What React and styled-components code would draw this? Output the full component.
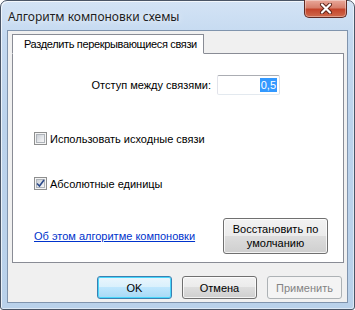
import styled, { createGlobalStyle, css } from "styled-components";

const GlobalStyle = createGlobalStyle`
  html, body { margin: 0; padding: 0; background: #ffffff; }
  body { font-family: "Liberation Sans", Arial, sans-serif; font-size: 11px; }
`;

const Window = styled.div`
  width: 355px;
  height: 310px;
  box-sizing: border-box;
  border: 1px solid #4a5566;
  border-radius: 7px 7px 3px 3px;
  background: linear-gradient(180deg, #d3e3f5 0%, #c4d9f0 12%, #bcd3ec 40%, #b9d1ea 100%);
  display: flex;
  flex-direction: column;
  padding: 0 6px 6px 6px;
  box-shadow: inset 1px 1px 0 rgba(255, 255, 255, 0.7), inset -1px -1px 0 rgba(255, 255, 255, 0.5);
`;

const TitleBar = styled.div`
  height: 29px;
  display: flex;
  align-items: flex-start;
  justify-content: space-between;
`;

const Title = styled.span`
  font-family: "Noto Sans", "Open Sans", sans-serif;
  font-size: 12px;
  color: #1e1e1e;
  margin: 7px 0 0 1px;
  text-shadow: 0 0 6px rgba(255, 255, 255, 0.9);
`;

const CloseButton = styled.div`
  width: 43px;
  height: 18px;
  margin-top: -1px;
  margin-right: 1px;
  box-sizing: border-box;
  border: 1px solid #5e2a24;
  border-top: none;
  border-radius: 0 0 5px 5px;
  background: linear-gradient(180deg, #e9a89a 0%, #d77f6c 45%, #c4442b 55%, #cf6a4c 100%);
  box-shadow: inset 0 0 0 1px rgba(255, 255, 255, 0.35);
  display: flex;
  align-items: center;
  justify-content: center;
`;

const Client = styled.div`
  flex: 1;
  background: #f0f0f0;
  border: 1px solid #8094ad;
  display: flex;
  flex-direction: column;
  padding: 3px 3px 0 4px;
`;

const TabStrip = styled.div`
  display: flex;
  position: relative;
  z-index: 1;
  margin-bottom: -1px;
`;

const Tab = styled.div`
  height: 20px;
  padding: 0 0 0 11px;
  width: 192px;
  box-sizing: border-box;
  background: #ffffff;
  border: 1px solid #898c95;
  border-bottom: 1px solid #ffffff;
  display: flex;
  align-items: center;
  white-space: nowrap;
  letter-spacing: -0.35px;
  color: #000;
`;

const Panel = styled.div`
  height: 210px;
  box-sizing: border-box;
  background: #ffffff;
  border: 1px solid #898c95;
  display: flex;
  flex-direction: column;
  padding: 21px 15px 0 21px;
`;

const FieldRow = styled.div`
  display: flex;
  align-items: center;
  justify-content: flex-end;
  gap: 6px;
  margin-right: 48px;
`;

const Label = styled.span`
  color: #000;
`;

const TextBox = styled.div`
  width: 63px;
  height: 20px;
  box-sizing: border-box;
  border: 1px solid #abadb3;
  border-color: #abadb3 #dbdfe6 #e3e9ef #e2e3ea;
  border-radius: 2px;
  background: #fff;
  display: flex;
  align-items: center;
  justify-content: flex-end;
  padding-right: 2px;
`;

const Selected = styled.span`
  background: #3399ff;
  color: #ffffff;
  line-height: 14px;
  padding: 0 1px;
`;

const CheckRow = styled.label`
  display: flex;
  align-items: center;
  gap: 3px;
  margin-top: ${(p) => p.$top}px;
  color: #000;
`;

const Box = styled.span`
  width: 13px;
  height: 13px;
  box-sizing: border-box;
  border: 1px solid #8e8f8f;
  background: #f4f4f4;
  position: relative;
  display: inline-flex;
  align-items: center;
  justify-content: center;
  &::before {
    content: "";
    position: absolute;
    inset: 1px;
    background: linear-gradient(135deg, #cbcfd5 0%, #e6e8eb 60%, #f6f6f6 100%);
    border: 1px solid #aeb3b9;
  }
  svg { position: relative; }
`;

const BottomRow = styled.div`
  display: flex;
  align-items: center;
  justify-content: space-between;
  margin-top: 28px;
`;

const Link = styled.a`
  color: #0033cc;
  text-decoration: underline;
  cursor: pointer;
`;

const buttonBase = css`
  box-sizing: border-box;
  font-family: "Liberation Sans", Arial, sans-serif;
  font-size: 11px;
  font-weight: normal;
  border-radius: 3px;
  border: 1px solid #707070;
  background: linear-gradient(180deg, #f2f2f2 0%, #ebebeb 49%, #dddddd 50%, #cfcfcf 100%);
  box-shadow: inset 0 0 0 1px rgba(255, 255, 255, 0.75);
  color: #000;
  padding: 0;
`;

const Button = styled.button`
  ${buttonBase};
  width: ${(p) => p.$w || 75}px;
  height: ${(p) => p.$h || 23}px;
  line-height: 14px;
  ${(p) =>
    p.$default &&
    css`
      border-color: #3c7fb1;
      background: linear-gradient(180deg, #eaf6fd 0%, #d9f0fc 49%, #bee6fd 50%, #a7d9f5 100%);
      box-shadow: inset 0 0 0 1px #48d7fb;
    `}
  ${(p) =>
    p.disabled &&
    css`
      border-color: #adb2b5;
      background: #f4f4f4;
      box-shadow: none;
      color: #838383;
    `}
`;

const Footer = styled.div`
  display: flex;
  justify-content: flex-end;
  gap: 10px;
  margin-top: 13px;
  padding-right: 2px;
`;

function CheckMark() {
  return (
    <svg width="9" height="9" viewBox="0 0 9 9">
      <path d="M1 4.5 L3.5 7 L8 1" fill="none" stroke="#2c4a8a" strokeWidth="1.6" />
    </svg>
  );
}

function CloseGlyph() {
  return (
    <svg width="14" height="11" viewBox="0 0 14 11">
      <path d="M3 1.5 L11 9.5 M11 1.5 L3 9.5" stroke="#5a2218" strokeWidth="4" strokeLinecap="round" />
      <path d="M3 1.5 L11 9.5 M11 1.5 L3 9.5" stroke="#ffffff" strokeWidth="2.2" strokeLinecap="round" />
    </svg>
  );
}

export default function App() {
  return (
    <>
      <GlobalStyle />
      <Window>
        <TitleBar>
          <Title>Алгоритм компоновки схемы</Title>
          <CloseButton>
            <CloseGlyph />
          </CloseButton>
        </TitleBar>
        <Client>
          <TabStrip>
            <Tab>Разделить перекрывающиеся связи</Tab>
          </TabStrip>
          <Panel>
            <FieldRow>
              <Label>Отступ между связями:</Label>
              <TextBox>
                <Selected>0,5</Selected>
              </TextBox>
            </FieldRow>
            <CheckRow $top={37}>
              <Box />
              Использовать исходные связи
            </CheckRow>
            <CheckRow $top={32}>
              <Box>
                <CheckMark />
              </Box>
              Абсолютные единицы
            </CheckRow>
            <BottomRow>
              <Link>Об этом алгоритме компоновки</Link>
              <Button $w={105} $h={36}>
                Восстановить по
                <br />
                умолчанию
              </Button>
            </BottomRow>
          </Panel>
          <Footer>
            <Button $default>OK</Button>
            <Button>Отмена</Button>
            <Button disabled>Применить</Button>
          </Footer>
        </Client>
      </Window>
    </>
  );
}
